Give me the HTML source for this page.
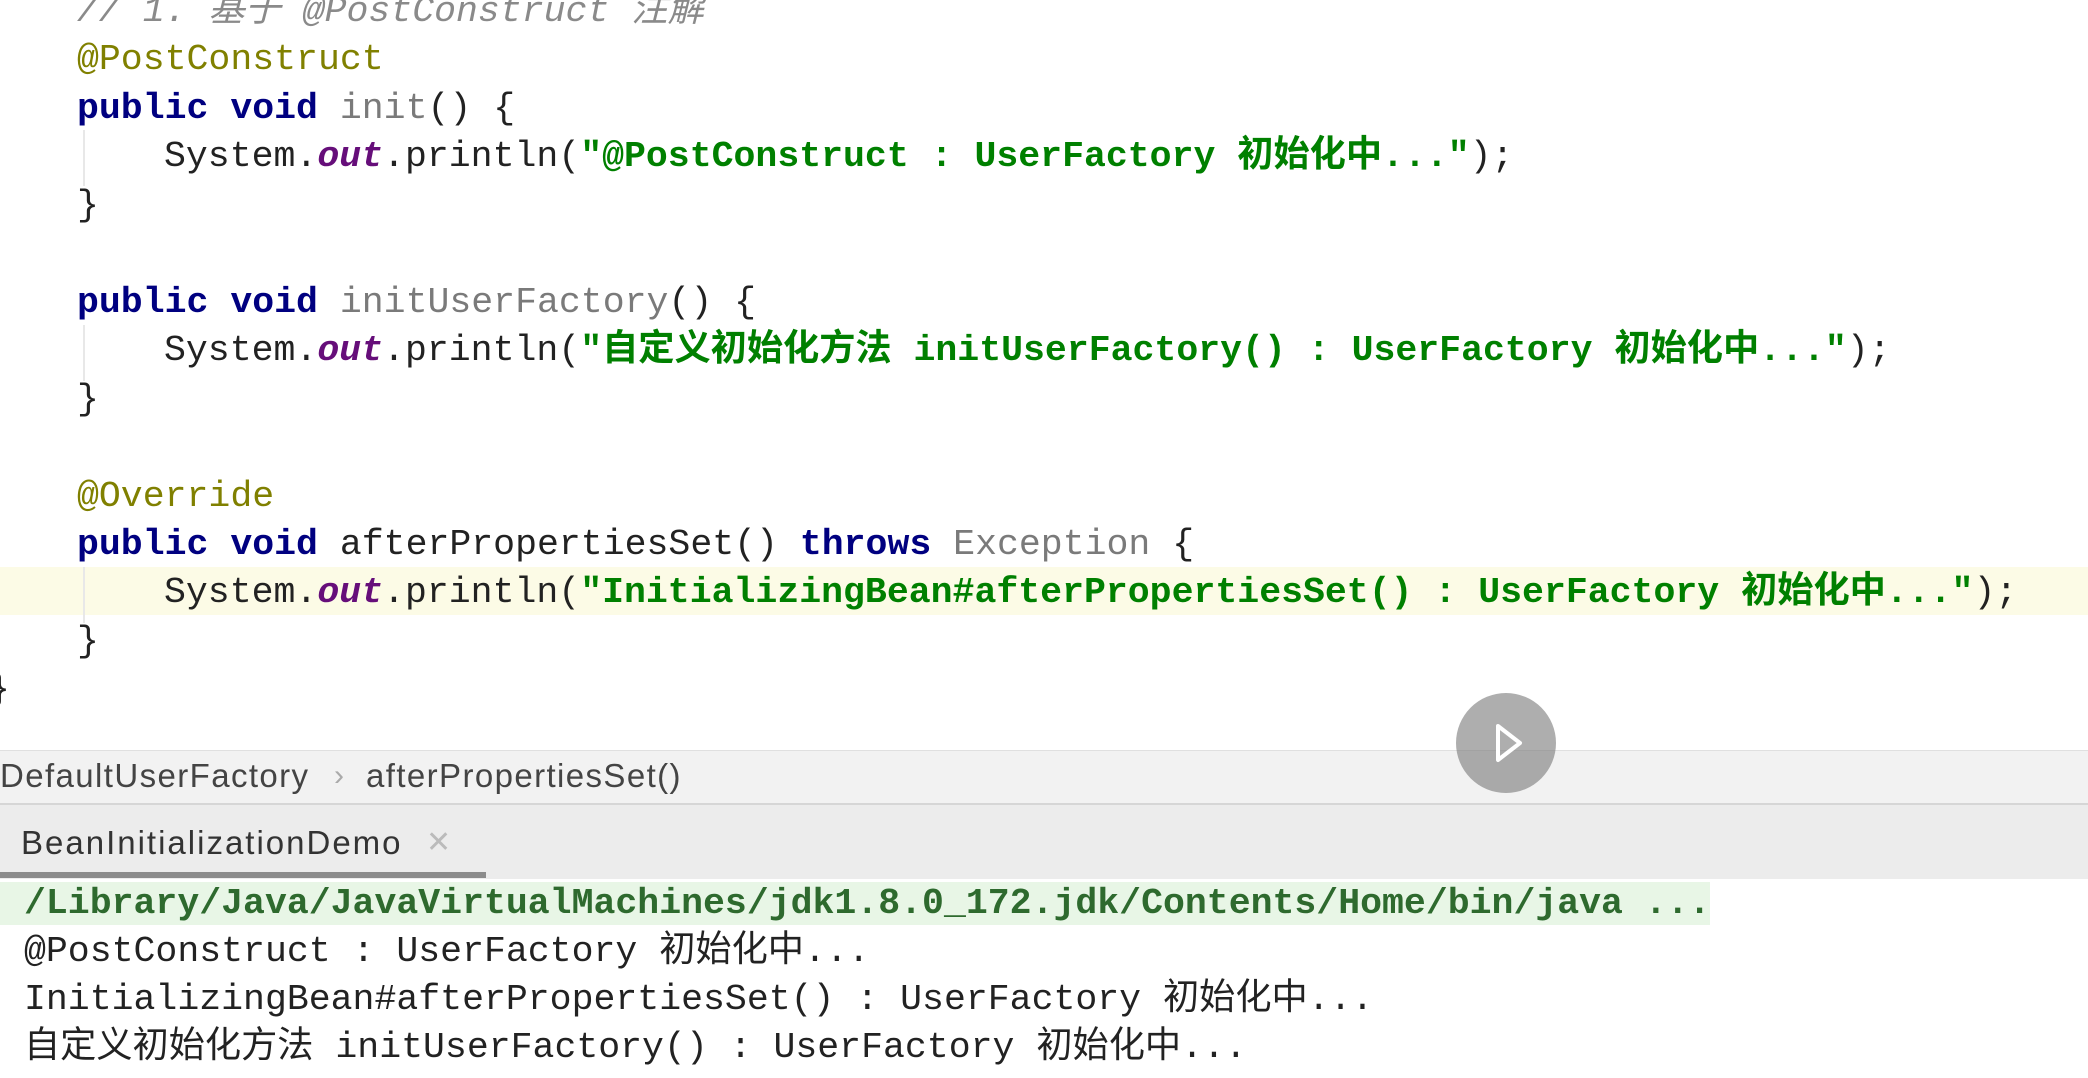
<!DOCTYPE html>
<html><head><meta charset="utf-8"><style>
body{margin:0;width:2088px;height:1078px;overflow:hidden;background:#fff;position:relative;font-family:"Liberation Mono","Noto Sans CJK SC",monospace;}
.l{position:absolute;left:0;height:48px;line-height:48px;font-size:36.5px;white-space:pre;color:#222;}
.c{font-size:36.2px;}
.k{color:#000080;font-weight:bold}
.s{color:#008000;font-weight:bold}
.a{color:#808000}
.g{color:#7a7a7a}
.o{color:#660e7a;font-weight:bold;font-style:italic}
.cm{color:#8a8a8a;font-style:italic}
.guide{position:absolute;left:83px;width:2px;background:#e8e8e8}
.sans{font-family:"Liberation Sans","Noto Sans CJK SC",sans-serif}
</style></head><body>
<div style="position:absolute;left:0;top:567px;width:2088px;height:48px;background:#fcfbe6"></div>
<div class="guide" style="top:130px;height:56px"></div>
<div class="guide" style="top:325px;height:56px"></div>
<div class="guide" style="top:567px;height:56px"></div>

<div class="l cm" style="top:-12px;left:77px">// 1. <span class="c">基于</span> @PostConstruct <span class="c">注解</span></div>
<div class="l a" style="top:36px;left:77px">@PostConstruct</div>
<div class="l" style="top:85px;left:77px"><span class="k">public void</span> <span class="g">init</span>() {</div>
<div class="l" style="top:133px;left:164px">System.<span class="o">out</span>.println(<span class="s">"@PostConstruct : UserFactory <span class="c">初始化中</span>..."</span>);</div>
<div class="l" style="top:182px;left:77px">}</div>
<div class="l" style="top:279px;left:77px"><span class="k">public void</span> <span class="g">initUserFactory</span>() {</div>
<div class="l" style="top:327px;left:164px">System.<span class="o">out</span>.println(<span class="s">"<span class="c">自定义初始化方法</span> initUserFactory() : UserFactory <span class="c">初始化中</span>..."</span>);</div>
<div class="l" style="top:376px;left:77px">}</div>
<div class="l a" style="top:473px;left:77px">@Override</div>
<div class="l" style="top:521px;left:77px"><span class="k">public void</span> afterPropertiesSet() <span class="k">throws</span> <span class="g">Exception</span> {</div>
<div class="l" style="top:569px;left:164px">System.<span class="o">out</span>.println(<span class="s">"InitializingBean#afterPropertiesSet() : UserFactory <span class="c">初始化中</span>..."</span>);</div>
<div class="l" style="top:618px;left:77px">}</div>
<div class="l" style="top:666px;left:-12px">}</div>

<div style="position:absolute;left:0;top:750px;width:2088px;height:52px;background:#f2f2f2;border-top:1px solid #e0e0e0;border-bottom:2px solid #d6d6d6"></div>
<div class="sans" style="position:absolute;left:0;top:757px;font-size:33px;letter-spacing:1.4px;line-height:38px;color:#444;white-space:pre">DefaultUserFactory</div>
<div class="sans" style="position:absolute;left:334px;top:757px;font-size:30px;line-height:38px;color:#aaa">›</div>
<div class="sans" style="position:absolute;left:366px;top:757px;font-size:33px;letter-spacing:1.4px;line-height:38px;color:#444;white-space:pre">afterPropertiesSet()</div>
<div style="position:absolute;left:0;top:805px;width:2088px;height:74px;background:#ececec"></div>
<div class="sans" style="position:absolute;left:21px;top:824px;font-size:33px;letter-spacing:2px;line-height:38px;color:#333;white-space:pre">BeanInitializationDemo</div>
<div class="sans" style="position:absolute;left:426px;top:824px;font-size:30px;line-height:38px;color:#bbb">✕</div>
<div style="position:absolute;left:0;top:872px;width:486px;height:6px;background:#8c8c8c"></div>
<div style="position:absolute;left:0;top:882px;width:1710px;height:43px;background:#e8f6e6"></div>

<div class="l" style="top:880px;left:24px;color:#2e6a2e;font-weight:bold">/Library/Java/JavaVirtualMachines/jdk1.8.0_172.jdk/Contents/Home/bin/java ...</div>
<div class="l" style="top:928px;left:24px">@PostConstruct : UserFactory <span class="c">初始化中</span>...</div>
<div class="l" style="top:976px;left:24px">InitializingBean#afterPropertiesSet() : UserFactory <span class="c">初始化中</span>...</div>
<div class="l" style="top:1024px;left:24px"><span class="c">自定义初始化方法</span> initUserFactory() : UserFactory <span class="c">初始化中</span>...</div>

<div style="position:absolute;left:1456px;top:693px;width:100px;height:100px;border-radius:50%;background:rgba(120,120,120,0.6)"></div>
<svg style="position:absolute;left:1456px;top:693px" width="100" height="100"><path d="M42 33 L64 50 L42 67 Z" fill="none" stroke="#fff" stroke-width="4" stroke-linejoin="round"/></svg>
</body></html>
